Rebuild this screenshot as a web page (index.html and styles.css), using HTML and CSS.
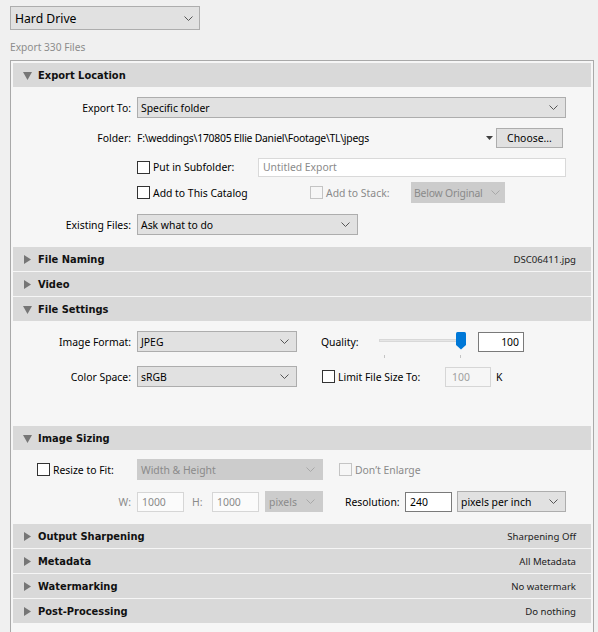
FILE: index.html
```html
<!DOCTYPE html>
<html>
<head>
<meta charset="utf-8">
<link rel="stylesheet" href="styles.css">
</head>
<body>
<div class="top">
  <div class="hd-select"><span>Hard Drive</span><svg class="chev" width="9" height="5" viewBox="0 0 9 5"><polyline points="0.5,0.5 4.5,4.5 8.5,0.5" fill="none" stroke="#555" stroke-width="1"/></svg></div>
</div>
<div class="count">Export 330 Files</div>
<div class="frame">

  <div class="sec">
    <div class="hdr"><svg class="tri" width="9" height="9" viewBox="0 0 9 9"><polygon points="0,1 9,1 4.5,9" fill="#767676"/></svg><span class="ttl">Export Location</span></div>
    <div class="body loc">
      <div class="row">
        <div class="lbl">Export To:</div>
        <div class="sel w429"><span>Specific folder</span><svg width="9" height="5" viewBox="0 0 9 5"><polyline points="0.5,0.5 4.5,4.5 8.5,0.5" fill="none" stroke="#555"/></svg></div>
      </div>
      <div class="row r20 mt10">
        <div class="lbl">Folder:</div>
        <div class="folder">
          <span class="path">F:\weddings\170805 Ellie Daniel\Footage\TL\jpegs</span>
          <svg class="minitri" width="7" height="4" viewBox="0 0 7 4"><polygon points="0,0 7,0 3.5,4" fill="#404040"/></svg>
          <div class="btn">Choose...</div>
        </div>
      </div>
      <div class="row r20 mt9">
        <div class="lbl"></div>
        <div class="grp g121"><span class="cb"></span><span>Put in Subfolder:</span></div>
        <div class="inp ghost w308">Untitled Export</div>
      </div>
      <div class="row mt5">
        <div class="lbl"></div>
        <div class="grp g173"><span class="cb"></span><span>Add to This Catalog</span></div>
        <div class="grp g101 muted"><span class="cb dis"></span><span>Add to Stack:</span></div>
        <div class="sel dis w94 tight"><span>Below Original</span><svg width="9" height="5" viewBox="0 0 9 5"><polyline points="0.5,0.5 4.5,4.5 8.5,0.5" fill="none" stroke="#a8a8a8"/></svg></div>
      </div>
      <div class="row mt11">
        <div class="lbl">Existing Files:</div>
        <div class="sel w221"><span>Ask what to do</span><svg width="9" height="5" viewBox="0 0 9 5"><polyline points="0.5,0.5 4.5,4.5 8.5,0.5" fill="none" stroke="#555"/></svg></div>
      </div>
    </div>
  </div>

  <div class="sec">
    <div class="hdr"><svg class="tri" width="9" height="9" viewBox="0 0 9 9"><polygon points="1,0 8,4.5 1,9" fill="#767676"/></svg><span class="ttl">File Naming</span><span class="info">DSC06411.jpg</span></div>
  </div>
  <div class="sec">
    <div class="hdr"><svg class="tri" width="9" height="9" viewBox="0 0 9 9"><polygon points="1,0 8,4.5 1,9" fill="#767676"/></svg><span class="ttl">Video</span></div>
  </div>

  <div class="sec">
    <div class="hdr"><svg class="tri" width="9" height="9" viewBox="0 0 9 9"><polygon points="0,1 9,1 4.5,9" fill="#767676"/></svg><span class="ttl">File Settings</span></div>
    <div class="body fs">
      <div class="row">
        <div class="lbl">Image Format:</div>
        <div class="sel w160"><span>JPEG</span><svg width="9" height="5" viewBox="0 0 9 5"><polyline points="0.5,0.5 4.5,4.5 8.5,0.5" fill="none" stroke="#555"/></svg></div>
        <div class="qlbl">Quality:</div>
        <div class="slider">
          <div class="track"></div>
          <svg class="thumb" width="10" height="18" viewBox="0 0 10 18"><path d="M0,1.5 Q0,0 1.5,0 H8.5 Q10,0 10,1.5 V13 L5,17.5 L0,13 Z" fill="#0078d7"/></svg>
          <span class="tick t1"></span><span class="tick t2"></span>
        </div>
        <div class="inp dark w46 right">100</div>
      </div>
      <div class="row mt14">
        <div class="lbl">Color Space:</div>
        <div class="sel w160"><span>sRGB</span><svg width="9" height="5" viewBox="0 0 9 5"><polyline points="0.5,0.5 4.5,4.5 8.5,0.5" fill="none" stroke="#555"/></svg></div>
        <div class="grp g123 ml25"><span class="cb"></span><span>Limit File Size To:</span></div>
        <div class="inp off w46">100</div>
        <span class="k">K</span>
      </div>
    </div>
  </div>

  <div class="sec">
    <div class="hdr"><svg class="tri" width="9" height="9" viewBox="0 0 9 9"><polygon points="0,1 9,1 4.5,9" fill="#767676"/></svg><span class="ttl">Image Sizing</span></div>
    <div class="body is">
      <div class="row">
        <div class="grp g124 pl24"><span class="cb"></span><span>Resize to Fit:</span></div>
        <div class="sel dis w186"><span>Width &amp; Height</span><svg width="9" height="5" viewBox="0 0 9 5"><polyline points="0.5,0.5 4.5,4.5 8.5,0.5" fill="none" stroke="#a8a8a8"/></svg></div>
        <div class="grp ml16 muted"><span class="cb dis"></span><span>Don’t Enlarge</span></div>
      </div>
      <div class="row mt11">
        <div class="lbl muted">W:</div>
        <div class="inp off2 w47">1000</div>
        <div class="hlbl muted">H:</div>
        <div class="inp off2 w47">1000</div>
        <div class="sel dis w58 ml6"><span>pixels</span><svg width="9" height="5" viewBox="0 0 9 5"><polyline points="0.5,0.5 4.5,4.5 8.5,0.5" fill="none" stroke="#a8a8a8"/></svg></div>
        <div class="rlbl">Resolution:</div>
        <div class="inp dark w47">240</div>
        <div class="sel w109 ml5"><span>pixels per inch</span><svg width="9" height="5" viewBox="0 0 9 5"><polyline points="0.5,0.5 4.5,4.5 8.5,0.5" fill="none" stroke="#555"/></svg></div>
      </div>
    </div>
  </div>

  <div class="sec">
    <div class="hdr"><svg class="tri" width="9" height="9" viewBox="0 0 9 9"><polygon points="1,0 8,4.5 1,9" fill="#767676"/></svg><span class="ttl">Output Sharpening</span><span class="info">Sharpening Off</span></div>
  </div>
  <div class="sec">
    <div class="hdr"><svg class="tri" width="9" height="9" viewBox="0 0 9 9"><polygon points="1,0 8,4.5 1,9" fill="#767676"/></svg><span class="ttl">Metadata</span><span class="info">All Metadata</span></div>
  </div>
  <div class="sec">
    <div class="hdr"><svg class="tri" width="9" height="9" viewBox="0 0 9 9"><polygon points="1,0 8,4.5 1,9" fill="#767676"/></svg><span class="ttl">Watermarking</span><span class="info">No watermark</span></div>
  </div>
  <div class="sec">
    <div class="hdr"><svg class="tri" width="9" height="9" viewBox="0 0 9 9"><polygon points="1,0 8,4.5 1,9" fill="#767676"/></svg><span class="ttl">Post-Processing</span><span class="info">Do nothing</span></div>
  </div>
</div>
</body>
</html>
```
FILE: styles.css
```css
html, body {
  margin: 0;
  padding: 0;
  background: #f0f0f0;
  overflow: hidden;
  height: 632px;
}
body {
  font-family: "Noto Sans", "Open Sans", sans-serif;
  font-size: 10.4px;
  color: #000;
}
.top {
  padding: 6px 0 0 10px;
}
.hd-select {
  width: 190px;
  height: 24px;
  box-sizing: border-box;
  border: 1px solid #adadad;
  background: #e1e1e1;
  display: flex;
  align-items: center;
  justify-content: space-between;
  padding: 0 6px 0 4px;
  font-size: 12.2px;
}
.count {
  margin: 10px 0 6px 10px;
  height: 14px;
  line-height: 14px;
  color: #8c8c8c;
  font-size: 10.2px;
}
.frame {
  margin-left: 10px;
  width: 578px;
  min-height: 620px;
  border: 1px solid #a9a9a9;
  padding: 2px;
  background: #f6f6f6;
}
.sec {
  margin-bottom: 1px;
}
.hdr {
  height: 24px;
  background: #d9d9d9;
  display: flex;
  align-items: center;
  padding: 0 15px 0 10px;
}
.tri {
  flex: none;
}
.ttl {
  margin-left: 6px;
  font-family: "DejaVu Sans Condensed", "DejaVu Sans", sans-serif;
  font-stretch: condensed;
  font-weight: bold;
  font-size: 11px;
  color: #111;
}
.info {
  margin-left: auto;
  font-size: 9.6px;
  color: #222;
}
.body.loc {
  padding: 10px 0 11px;
}
.body.fs {
  padding: 10px 0 38px;
}
.body.is {
  padding: 9px 0 11px;
}
.row {
  display: flex;
  align-items: center;
  height: 21px;
  white-space: nowrap;
}
.r20 { height: 20px; }
.mt5 { margin-top: 5px; }
.mt9 { margin-top: 9px; }
.mt10 { margin-top: 10px; }
.mt11 { margin-top: 11px; }
.mt14 { margin-top: 14px; }
.ml5 { margin-left: 5px; }
.ml6 { margin-left: 6px; }
.ml16 { margin-left: 16px; }
.ml25 { margin-left: 25px; }
.pl24 { padding-left: 24px; box-sizing: border-box; }
.lbl {
  width: 118px;
  margin-right: 6px;
  text-align: right;
  flex: none;
}
.sel {
  display: flex;
  align-items: center;
  justify-content: space-between;
  height: 21px;
  box-sizing: border-box;
  border: 1px solid #adadad;
  background: #e1e1e1;
  padding: 0 7px 0 3px;
  flex: none;
  overflow: hidden;
}
.sel svg {
  flex: none;
  margin-left: 4px;
}
.sel.dis {
  background: #cccccc;
  border-color: #cccccc;
  color: #8a8a8a;
}
.sel.tight {
  padding: 0 4px 0 2px;
  letter-spacing: -0.2px;
}
.sel.tight svg {
  margin-left: 2px;
}
.w429 { width: 429px; }
.w221 { width: 221px; }
.w160 { width: 160px; }
.w94 { width: 94px; }
.w186 { width: 186px; }
.w58 { width: 58px; }
.w109 { width: 109px; }
.w308 { width: 308px; }
.w46 { width: 46px; }
.w47 { width: 47px; }
.folder {
  width: 426px;
  display: flex;
  align-items: center;
}
.path {
  flex: 1;
  letter-spacing: -0.25px;
}
.minitri {
  margin-right: 3px;
}
.btn {
  width: 67px;
  height: 20px;
  box-sizing: border-box;
  border: 1px solid #adadad;
  background: #e1e1e1;
  display: flex;
  align-items: center;
  justify-content: center;
}
.grp {
  display: flex;
  align-items: center;
  flex: none;
}
.g121 { width: 121px; }
.g173 { width: 173px; }
.g101 { width: 101px; }
.g123 { width: 123px; }
.g124 { width: 124px; }
.cb {
  width: 13px;
  height: 13px;
  box-sizing: border-box;
  border: 1px solid #333;
  background: #fff;
  margin-right: 3px;
  flex: none;
}
.cb.dis {
  border-color: #c4c4c4;
  background: #f6f6f6;
}
.muted {
  color: #8a8a8a;
}
.inp {
  height: 20px;
  box-sizing: border-box;
  border: 1px solid #d9d9d9;
  background: #fff;
  display: flex;
  align-items: center;
  padding: 0 4px;
  flex: none;
}
.inp.ghost {
  color: #8a8a8a;
  height: 19px;
}
.inp.dark {
  border-color: #7a7a7a;
}
.inp.right {
  justify-content: flex-end;
}
.inp.off {
  background: #f6f6f6;
  border-color: #d6d6d6;
  color: #a0a0a0;
  padding-left: 6px;
}
.inp.off2 {
  background: #fbfbfb;
  border-color: #d6d6d6;
  color: #8a8a8a;
}
.k {
  margin-left: 5px;
}
.qlbl {
  margin-left: 24px;
  width: 58px;
  flex: none;
}
.slider {
  position: relative;
  width: 99px;
  height: 21px;
  flex: none;
}
.track {
  position: absolute;
  left: 0;
  top: 8px;
  width: 83px;
  height: 3px;
  background: #e6e6e6;
  border: 1px solid #d8d8d8;
  box-sizing: border-box;
}
.thumb {
  position: absolute;
  left: 77px;
  top: 1px;
}
.tick {
  position: absolute;
  top: 24px;
  width: 1px;
  height: 3px;
  background: #c4c4c4;
}
.t1 { left: 5px; }
.t2 { left: 81px; }
.hlbl {
  width: 28px;
  padding-left: 8px;
  box-sizing: border-box;
  flex: none;
}
.rlbl {
  margin-left: 22px;
  width: 60px;
  flex: none;
}
```
